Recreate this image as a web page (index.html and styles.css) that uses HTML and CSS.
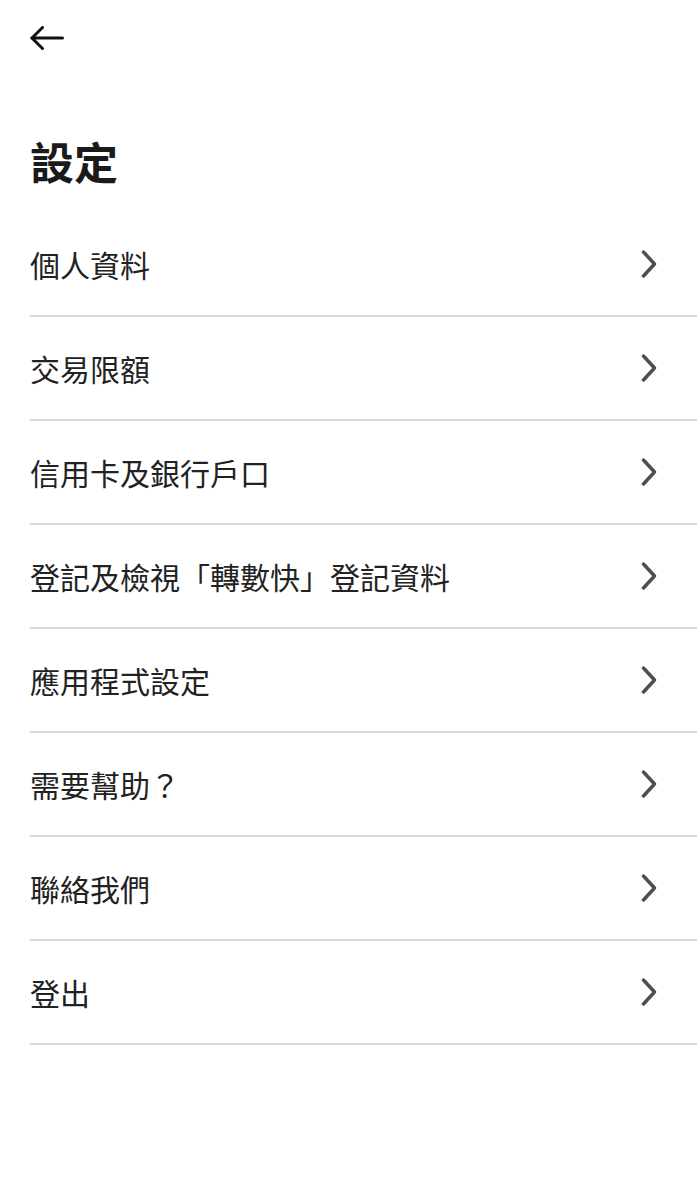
FILE: index.html
```html
<!DOCTYPE html>
<html lang="zh-Hant">
<head>
<meta charset="utf-8">
<title>設定</title>
<link rel="stylesheet" href="styles.css">
</head>
<body>
<div class="page">
  <header class="topbar">
    <button class="back" aria-label="返回">
      <svg width="34" height="24" viewBox="0 0 34 24" fill="none" stroke="#111" stroke-width="3" stroke-linecap="round" stroke-linejoin="round">
        <path d="M2 12 H32.5"/>
        <path d="M12.5 1.5 L2 12 L12.5 22.5"/>
      </svg>
    </button>
  </header>
  <h1 class="title">設定</h1>
  <ul class="menu">
    <li class="item"><span class="label">個人資料</span><svg class="chev" width="16" height="28" viewBox="0 0 16 28"><polyline points="2.5,2 13.5,14 2.5,26"/></svg></li>
    <li class="item"><span class="label">交易限額</span><svg class="chev" width="16" height="28" viewBox="0 0 16 28"><polyline points="2.5,2 13.5,14 2.5,26"/></svg></li>
    <li class="item"><span class="label">信用卡及銀行戶口</span><svg class="chev" width="16" height="28" viewBox="0 0 16 28"><polyline points="2.5,2 13.5,14 2.5,26"/></svg></li>
    <li class="item"><span class="label">登記及檢視「轉數快」登記資料</span><svg class="chev" width="16" height="28" viewBox="0 0 16 28"><polyline points="2.5,2 13.5,14 2.5,26"/></svg></li>
    <li class="item"><span class="label">應用程式設定</span><svg class="chev" width="16" height="28" viewBox="0 0 16 28"><polyline points="2.5,2 13.5,14 2.5,26"/></svg></li>
    <li class="item"><span class="label">需要幫助？</span><svg class="chev" width="16" height="28" viewBox="0 0 16 28"><polyline points="2.5,2 13.5,14 2.5,26"/></svg></li>
    <li class="item"><span class="label">聯絡我們</span><svg class="chev" width="16" height="28" viewBox="0 0 16 28"><polyline points="2.5,2 13.5,14 2.5,26"/></svg></li>
    <li class="item"><span class="label">登出</span><svg class="chev" width="16" height="28" viewBox="0 0 16 28"><polyline points="2.5,2 13.5,14 2.5,26"/></svg></li>
  </ul>
</div>
</body>
</html>
```
FILE: styles.css
```css
html, body {
  margin: 0;
  padding: 0;
  background: #ffffff;
}
body {
  font-family: "Noto Sans CJK TC", "Noto Sans", sans-serif;
  color: #222222;
}
.page {
  display: flex;
  flex-direction: column;
  padding-left: 30px;
}
.topbar {
  height: 76px;
  display: flex;
  align-items: center;
}
.back {
  display: flex;
  align-items: center;
  padding: 0;
  margin: 0;
  border: 0;
  background: none;
}
.title {
  margin: 55px 0 22px 0;
  font-size: 44px;
  line-height: 60px;
  font-weight: 700;
  color: #1a1a1a;
}
.menu {
  list-style: none;
  margin: 0;
  padding: 0;
  display: flex;
  flex-direction: column;
}
.item {
  height: 102px;
  border-bottom: 2px solid #d9d9d9;
  display: flex;
  align-items: center;
  justify-content: space-between;
  padding-right: 40px;
  box-sizing: content-box;
}
.label {
  font-size: 30px;
  line-height: 40px;
  font-weight: 400;
  color: #222222;
}
.chev {
  flex: none;
}
.chev polyline {
  fill: none;
  stroke: #4f4f4f;
  stroke-width: 3.5;
  stroke-linecap: round;
  stroke-linejoin: round;
}
```
